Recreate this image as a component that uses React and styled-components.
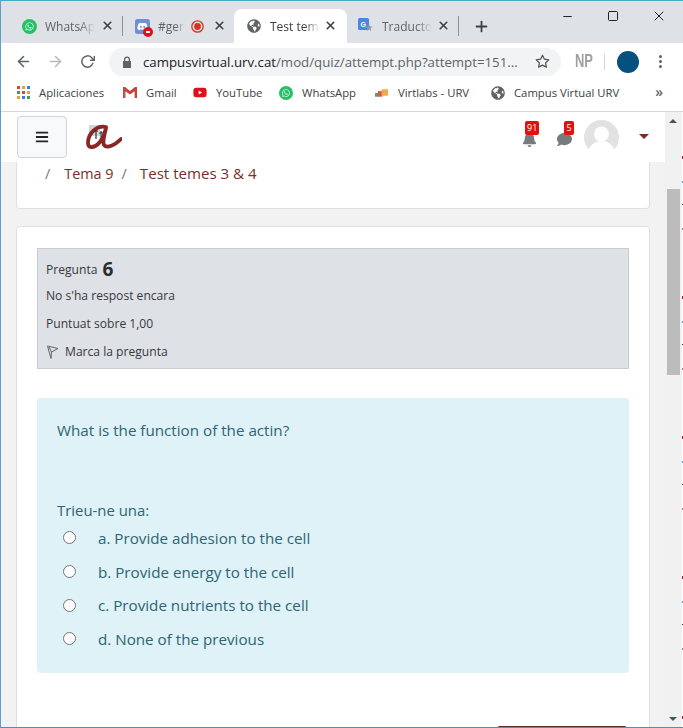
import React from 'react';
import styled, { createGlobalStyle } from 'styled-components';
import { FaWhatsapp, FaDiscord, FaGlobeAmericas, FaBars, FaBell, FaComment, FaYoutube } from 'react-icons/fa';
import { FiArrowLeft, FiArrowRight, FiRotateCw, FiStar, FiX, FiPlus, FiMinus, FiSquare } from 'react-icons/fi';

const Global = createGlobalStyle`
  html, body { margin: 0; padding: 0; background: #fff; }
  * { box-sizing: border-box; }
`;
const Frame = styled.div`
  width: 683px; height: 728px; overflow: hidden; display: flex; flex-direction: column;
  border-top: 1px solid #45aec6; border-left: 1px solid #5f9fcb; border-bottom: 1px solid #4a93b8;
  font-family: "Open Sans", "Noto Sans", sans-serif; position: relative; background: #fff;
`;
const TabStrip = styled.div`
  height: 42px; flex: none; background: #dee1e6; display: flex; align-items: flex-end; padding-left: 12px; position: relative;
`;
const Tab = styled.div`
  width: ${p => p.$w}px; height: 34px; flex: none; display: flex; align-items: center; padding-left: ${p => p.$pad || 8}px;
  position: relative; font-size: 12px; color: ${p => p.$active ? '#3c4043' : '#5f6368'};
  background: ${p => p.$active ? '#fff' : 'transparent'};
  border-radius: ${p => p.$active ? '8px 8px 0 0' : '0'};
`;
const TabSep = styled.div`
  width: 1px; height: 20px; background: #8d9094; position: absolute; right: 0; top: 7px;
`;
const TabIcon = styled.span`
  width: 16px; height: 16px; flex: none; display: flex; align-items: center; justify-content: center; position: relative;
  margin-left: ${p => p.$ml || 0}px;
`;
const TabTitle = styled.span`
  margin-left: ${p => p.$gap || 8}px; width: ${p => p.$w}px; overflow: hidden; white-space: nowrap; flex: none;
  -webkit-mask-image: linear-gradient(90deg, #000 70%, transparent);
  mask-image: linear-gradient(90deg, #000 70%, transparent);
`;
const TabClose = styled.span`
  position: absolute; right: ${p => p.$r}px; top: 10px; display: flex; color: #3c4043;
`;
const NewTab = styled.span`
  display: flex; margin: 0 0 8px 14px; color: #3c4043;
`;
const WindowControls = styled.div`
  position: absolute; top: 4px; right: 1px; display: flex; color: #222;
`;
const WinBtn = styled.span`
  width: 46px; height: 22px; display: flex; align-items: center; justify-content: center;
`;
const Toolbar = styled.div`
  height: 37px; flex: none; background: #fff; display: flex; align-items: center; padding-left: 13px; color: #5f6368;
`;
const NavIcon = styled.span`
  width: 18px; margin-right: 14px; display: flex; justify-content: center; color: ${p => p.$off ? '#b6b9bd' : '#5f6368'};
`;
const Omnibox = styled.div`
  width: 452px; height: 28px; margin-left: -1px; background: #f1f3f4; border-radius: 14px; display: flex; align-items: center;
  padding-left: 13px; font-size: 13.25px; color: #5f6368; white-space: nowrap; position: relative;
`;
const Lock = styled.svg`
  width: 10px; height: 12px; flex: none; margin-right: 11px;
`;
const Host = styled.span` color: #202124; `;
const OmniStar = styled.span`
  position: absolute; right: 11px; top: 6px; display: flex; color: #4f5357;
`;
const Initials = styled.span`
  margin-left: 14px; width: 20px; font-family: "Liberation Sans", sans-serif; font-weight: 700; font-size: 18px; color: #a0a0a0; transform: scaleX(.72); transform-origin: left;
`;
const ToolSep = styled.span`
  width: 1px; height: 16px; background: #d6d8db; margin-left: 9px;
`;
const Profile = styled.span`
  width: 22px; height: 22px; border-radius: 50%; background: #04507f; margin-left: 12px;
`;
const Kebab = styled.span`
  margin-left: 20px; display: flex; flex-direction: column; gap: 2px;
`;
const Dot = styled.span`
  width: 3px; height: 3px; border-radius: 50%; background: #5f6368;
`;
const Bookmarks = styled.div`
  height: 32px; flex: none; background: #fff; border-bottom: 1px solid #d3d6da; display: flex; align-items: center; padding: 0 0 6px 15px;
  font-size: 11.3px; color: #3c4043; position: relative; white-space: nowrap;
`;
const Bookmark = styled.span`
  display: flex; align-items: center; width: ${p => p.$w}px; flex: none; gap: 9px;
`;
const BmIcon = styled.span`
  width: 14px; height: 14px; flex: none; display: flex; align-items: center; justify-content: center;
`;
const More = styled.span`
  position: absolute; right: 20px; top: 2px; font-size: 14px; font-weight: 600; color: #5f6368;
`;
const Viewport = styled.div`
  flex: 1; min-height: 0; display: flex; position: relative;
`;
const Page = styled.div`
  width: 664px; flex: none; background: #f2f2f2; overflow: hidden;
`;
const Navbar = styled.div`
  height: 50px; background: #fff; display: flex; align-items: center; padding-left: 16px; position: relative;
`;
const MenuBtn = styled.div`
  width: 50px; height: 42px; background: #f8f9fa; border: 1px solid #ced4da; border-radius: 4px; display: flex; align-items: center; justify-content: center; color: #212529;
`;
const Logo = styled.svg`
  width: 36px; height: 26px; margin-left: 19px; flex: none;
`;
const NavRight = styled.div`
  margin-left: auto; display: flex; align-items: center; padding-right: 15px;
`;
const NotifIcon = styled.span`
  position: relative; width: 16px; height: 16px; margin-right: ${p => p.$mr}px; color: #777b7e; display: flex; margin-top: 6px;
`;
const Badge = styled.span`
  position: absolute; top: -11px; left: ${p => p.$l}px; min-width: ${p => p.$w}px; height: 14px; padding: 0 2px; background: #e60f0f; border-radius: 2px;
  color: #fff; font-size: 9px; line-height: 14px; text-align: center;
`;
const Avatar = styled.svg`
  width: 35px; height: 35px; flex: none; margin-right: 20px;
`;
const Caret = styled.span`
  width: 0; height: 0; border-left: 5px solid transparent; border-right: 5px solid transparent; border-top: 5px solid #7a2a2a; margin-top: -2px; margin-right: 1px;
`;
const CrumbCard = styled.div`
  margin: 0 15px; height: 47px; background: #fff; border: 1px solid #dedfe1; border-top: none; border-radius: 0 0 4px 4px;
  padding: 1px 0 0 28px; font-size: 14.4px; line-height: 21px; color: #6c757d; display: flex; white-space: nowrap;
`;
const Crumb = styled.span`
  color: #7a2e2a; font-size: ${p => p.$fs}px; margin: 0 ${p => p.$r}px 0 ${p => p.$l}px;
`;
const QuizCard = styled.div`
  margin: 17px 15px 0; height: 520px; background: #fff; border: 1px solid #dedfe1; border-radius: 4px; padding: 21px 20px 0;
`;
const Info = styled.div`
  height: 121px; background: #dee2e6; border: 1px solid #c9cbcf; padding: 9px 8px 0; color: #373a3c; font-size: 12.1px;
`;
const InfoRow = styled.div`
  height: 28px; line-height: 28px; display: flex; align-items: center;
`;
const TitleRow = styled(InfoRow)` height: 24px; `;
const QNo = styled.b`
  font-size: 19px; margin: 0 0 3px 5px; color: #2b2d2f; font-weight: 700;
`;
const Strong = styled.span` font-weight: 500; `;
const Flag = styled.svg`
  width: 13px; height: 14px; margin-right: 6px; flex: none;
`;
const Question = styled.div`
  margin-top: 29px; height: 275px; background: #def2f8; border-radius: 4px; padding: 21px 20px 0; color: #2f6473; font-size: 15.2px; line-height: 22px;
`;
const Choose = styled.div` margin-top: 58px; font-size: 14.9px; `;
const Option = styled.label`
  display: flex; align-items: center; height: 33.7px; padding-left: 6px; white-space: nowrap;
`;
const Radio = styled.span`
  width: 13px; height: 13px; flex: none; border-radius: 50%; background: #fff; border: 1px solid #767676; margin-right: 22px;
`;
const Next = styled.div`
  margin: 53px 2px 0 auto; width: 130px; height: 30px; background: #5e2b2b; border-radius: 3px 3px 0 0;
`;
const Scrollbar = styled.div`
  width: 17px; flex: none; background: #f1f1f1; position: relative;
`;
const Arrow = styled.span`
  position: absolute; left: 4px; ${p => p.$down ? 'bottom: 6px' : 'top: 7px'}; width: 0; height: 0;
  border-left: 4px solid transparent; border-right: 4px solid transparent;
  ${p => p.$down ? 'border-top: 4px solid #505050' : 'border-bottom: 4px solid #505050'};
`;
const Thumb = styled.div`
  position: absolute; left: 2px; top: 77px; width: 13px; height: 186px; background: #bcbcbc;
`;
const EdgeStrip = styled.div`
  width: 1px; flex: none; background: repeating-linear-gradient(180deg, #fff 0 44px, #7a2a3a 44px 47px, #fff 47px 69px, #5aa0c8 69px 71px, #fff 71px 92px, #333 92px 93px, #fff 93px 116px, #a08070 116px 118px, #fff 118px 140px);
`;

const WaIcon = ({ s = 15 }) => (
  <svg width={s} height={s} viewBox="0 0 16 16"><circle cx="8" cy="8" r="8" fill="#25c063" /><g transform="translate(3 3)"><FaWhatsapp size={10} color="#fff" /></g></svg>
);
const Discord = () => (
  <>
    <svg width="15" height="15" viewBox="0 0 15 15"><rect width="15" height="15" rx="2.5" fill="#6f8fd6" /><g transform="translate(2 2)"><FaDiscord size={11} color="#fff" /></g></svg>
    <svg width="10" height="10" viewBox="0 0 10 10" style={{ position: 'absolute', right: -3, bottom: -3 }}><circle cx="5" cy="5" r="5" fill="#d8141f" /><rect x="3" y="4" width="4" height="2" fill="#fff" /></svg>
  </>
);
const Recording = () => (
  <svg width="13" height="13" viewBox="0 0 13 13"><circle cx="6.5" cy="6.5" r="5.7" fill="none" stroke="#d93025" strokeWidth="1.3" /><circle cx="6.5" cy="6.5" r="3.4" fill="#d93025" /></svg>
);
const Translate = () => (
  <svg width="16" height="16" viewBox="0 0 16 16"><rect width="11" height="12" rx="1.5" fill="#4a85e8" /><text x="2.5" y="8.5" fontSize="7" fontWeight="700" fill="#fff" fontFamily="Liberation Sans">G</text><path d="M11 6l1 2.4 2.6.2-2 1.7.7 2.6-2.3-1.4-2.3 1.4.7-2.6-2-1.7 2.6-.2z" fill="#8b99ad" /></svg>
);
const AppsGrid = () => {
  const colors = ['#d9473a', '#e9a23b', '#3c7de0', '#3f9d5a', '#d9473a', '#e9a23b', '#e9a23b', '#3c7de0', '#3f9d5a'];
  return (
    <svg width="13" height="13" viewBox="0 0 13 13">
      {colors.map((c, i) => <rect key={i} x={(i % 3) * 5} y={Math.floor(i / 3) * 5} width="3" height="3" fill={c} />)}
    </svg>
  );
};
const Gmail = () => (
  <svg width="14" height="11" viewBox="0 0 14 11"><path d="M0 0h2l5 4 5-4h2v11h-2.4V4.2L7 7.6 2.4 4.2V11H0z" fill="#c5453d" /><path d="M2.4 4.2V11H1V3z" fill="#8c8c8c" opacity=".5" /></svg>
);
const Virtlabs = () => (
  <svg width="15" height="9" viewBox="0 0 15 9"><rect x="0" y="5" width="4" height="4" fill="#4fa95a" /><rect x="3" y="3" width="5" height="6" fill="#d9574a" /><rect x="7" y="1" width="7" height="7" rx="1" fill="#f0a94f" /></svg>
);

const Tabs = () => (
  <TabStrip>
    <Tab $w={110}>
      <TabIcon><WaIcon s={15} /></TabIcon>
      <TabTitle $w={50}>WhatsApp</TabTitle>
      <TabClose $r={9}><FiX size={13} strokeWidth={3} /></TabClose>
      <TabSep />
    </Tab>
    <Tab $w={111} $pad={11}>
      <TabIcon><Discord /></TabIcon>
      <TabTitle $w={26} $gap={8}>#general</TabTitle>
      <TabIcon $ml={5}><Recording /></TabIcon>
      <TabClose $r={8}><FiX size={13} strokeWidth={3} /></TabClose>
    </Tab>
    <Tab $w={113} $active $pad={12}>
      <TabIcon><FaGlobeAmericas size={14} color="#5f6368" /></TabIcon>
      <TabTitle $w={50}>Test temes</TabTitle>
      <TabClose $r={10}><FiX size={13} strokeWidth={3} /></TabClose>
    </Tab>
    <Tab $w={112} $pad={11}>
      <TabIcon><Translate /></TabIcon>
      <TabTitle $w={50}>Traductor</TabTitle>
      <TabClose $r={9}><FiX size={13} strokeWidth={3} /></TabClose>
      <TabSep />
    </Tab>
    <NewTab><FiPlus size={17} strokeWidth={2.5} /></NewTab>
    <WindowControls>
      <WinBtn><FiMinus size={13} /></WinBtn>
      <WinBtn><FiSquare size={12} /></WinBtn>
      <WinBtn><FiX size={16} strokeWidth={1.5} /></WinBtn>
    </WindowControls>
  </TabStrip>
);

const Chrome = () => (
  <>
    <Toolbar>
      <NavIcon><FiArrowLeft size={17} strokeWidth={2.2} /></NavIcon>
      <NavIcon $off><FiArrowRight size={17} strokeWidth={2.2} /></NavIcon>
      <NavIcon><FiRotateCw size={15} strokeWidth={2.4} /></NavIcon>
      <Omnibox>
        <Lock viewBox="0 0 10 12"><path d="M2 5V3.4a3 3 0 016 0V5h1v7H1V5zm1.3 0h3.4V3.4a1.7 1.7 0 00-3.4 0z" fill="#5f6368" /></Lock>
        <Host>campusvirtual.urv.cat</Host>/mod/quiz/attempt.php?attempt=151...
        <OmniStar><FiStar size={15} strokeWidth={2} /></OmniStar>
      </Omnibox>
      <Initials>NP</Initials>
      <ToolSep />
      <Profile />
      <Kebab><Dot /><Dot /><Dot /></Kebab>
    </Toolbar>
    <Bookmarks>
      <Bookmark $w={107}><BmIcon><AppsGrid /></BmIcon>Aplicaciones</Bookmark>
      <Bookmark $w={70}><BmIcon><Gmail /></BmIcon>Gmail</Bookmark>
      <Bookmark $w={86}><BmIcon><FaYoutube size={15} color="#e0101b" /></BmIcon>YouTube</Bookmark>
      <Bookmark $w={96}><BmIcon><WaIcon s={14} /></BmIcon>WhatsApp</Bookmark>
      <Bookmark $w={116}><BmIcon><Virtlabs /></BmIcon>Virtlabs - URV</Bookmark>
      <Bookmark $w={140}><BmIcon><FaGlobeAmericas size={14} color="#5f6368" /></BmIcon>Campus Virtual URV</Bookmark>
      <More>»</More>
    </Bookmarks>
  </>
);

const Navigation = () => (
  <Navbar>
    <MenuBtn><FaBars size={14} /></MenuBtn>
    <Logo viewBox="0 0 36 26">
      <rect x="3" y="1" width="11" height="11" fill="#d4d4d4" />
      <path d="M20 3C11 1 2 9 2 19c0 6 7 5 12-1 3-4 5-9 6-14-1 6-4 13-2 17 3 4 11 0 17-6" fill="none" stroke="#8a2626" strokeWidth="3.8" strokeLinecap="round" strokeLinejoin="round" />
      <path d="M8 7h4M10 7v8M13 9h4M15 7v6" stroke="#333" strokeWidth="1.2" />
    </Logo>
    <NavRight>
      <NotifIcon $mr={19}><FaBell size={15} /><Badge $l={3} $w={14}>91</Badge></NotifIcon>
      <NotifIcon $mr={11}><FaComment size={15} /><Badge $l={7} $w={10}>5</Badge></NotifIcon>
      <Avatar viewBox="0 0 35 35">
        <circle cx="17.5" cy="17.5" r="17.5" fill="#e2e2e2" />
        <circle cx="17.5" cy="14" r="7.5" fill="#fff" />
        <path d="M4 32c2-8 8-11 13.5-11S29 24 31 32a17.5 17.5 0 01-27 0z" fill="#fff" />
      </Avatar>
      <Caret />
    </NavRight>
  </Navbar>
);

const options = ['a. Provide adhesion to the cell', 'b. Provide energy to the cell', 'c. Provide nutrients to the cell', 'd. None of the previous'];

export default function App() {
  return (
    <>
      <Global />
      <Frame>
        <Tabs />
        <Chrome />
        <Viewport>
          <Page>
            <Navigation />
            <CrumbCard>
              /<Crumb $fs={14.4} $l={14} $r={8}>Tema 9</Crumb>/<Crumb $fs={15.1} $l={13} $r={0}>Test temes 3 &amp; 4</Crumb>
            </CrumbCard>
            <QuizCard>
              <Info>
                <TitleRow><Strong>Pregunta</Strong><QNo>6</QNo></TitleRow>
                <InfoRow>No s'ha respost encara</InfoRow>
                <InfoRow>Puntuat sobre 1,00</InfoRow>
                <InfoRow>
                  <Flag viewBox="0 0 13 14"><path d="M1.5 1L12 3.5 5.5 7l-.5 6.5zM3 2l2.5 5" fill="none" stroke="#666" strokeWidth="1" strokeLinejoin="round" /></Flag>
                  Marca la pregunta
                </InfoRow>
              </Info>
              <Question>
                What is the function of the actin?
                <Choose>Trieu-ne una:</Choose>
                {options.map(o => <Option key={o}><Radio />{o}</Option>)}
              </Question>
              <Next />
            </QuizCard>
          </Page>
          <Scrollbar>
            <Arrow />
            <Thumb />
            <Arrow $down />
          </Scrollbar>
          <EdgeStrip />
        </Viewport>
      </Frame>
    </>
  );
}
